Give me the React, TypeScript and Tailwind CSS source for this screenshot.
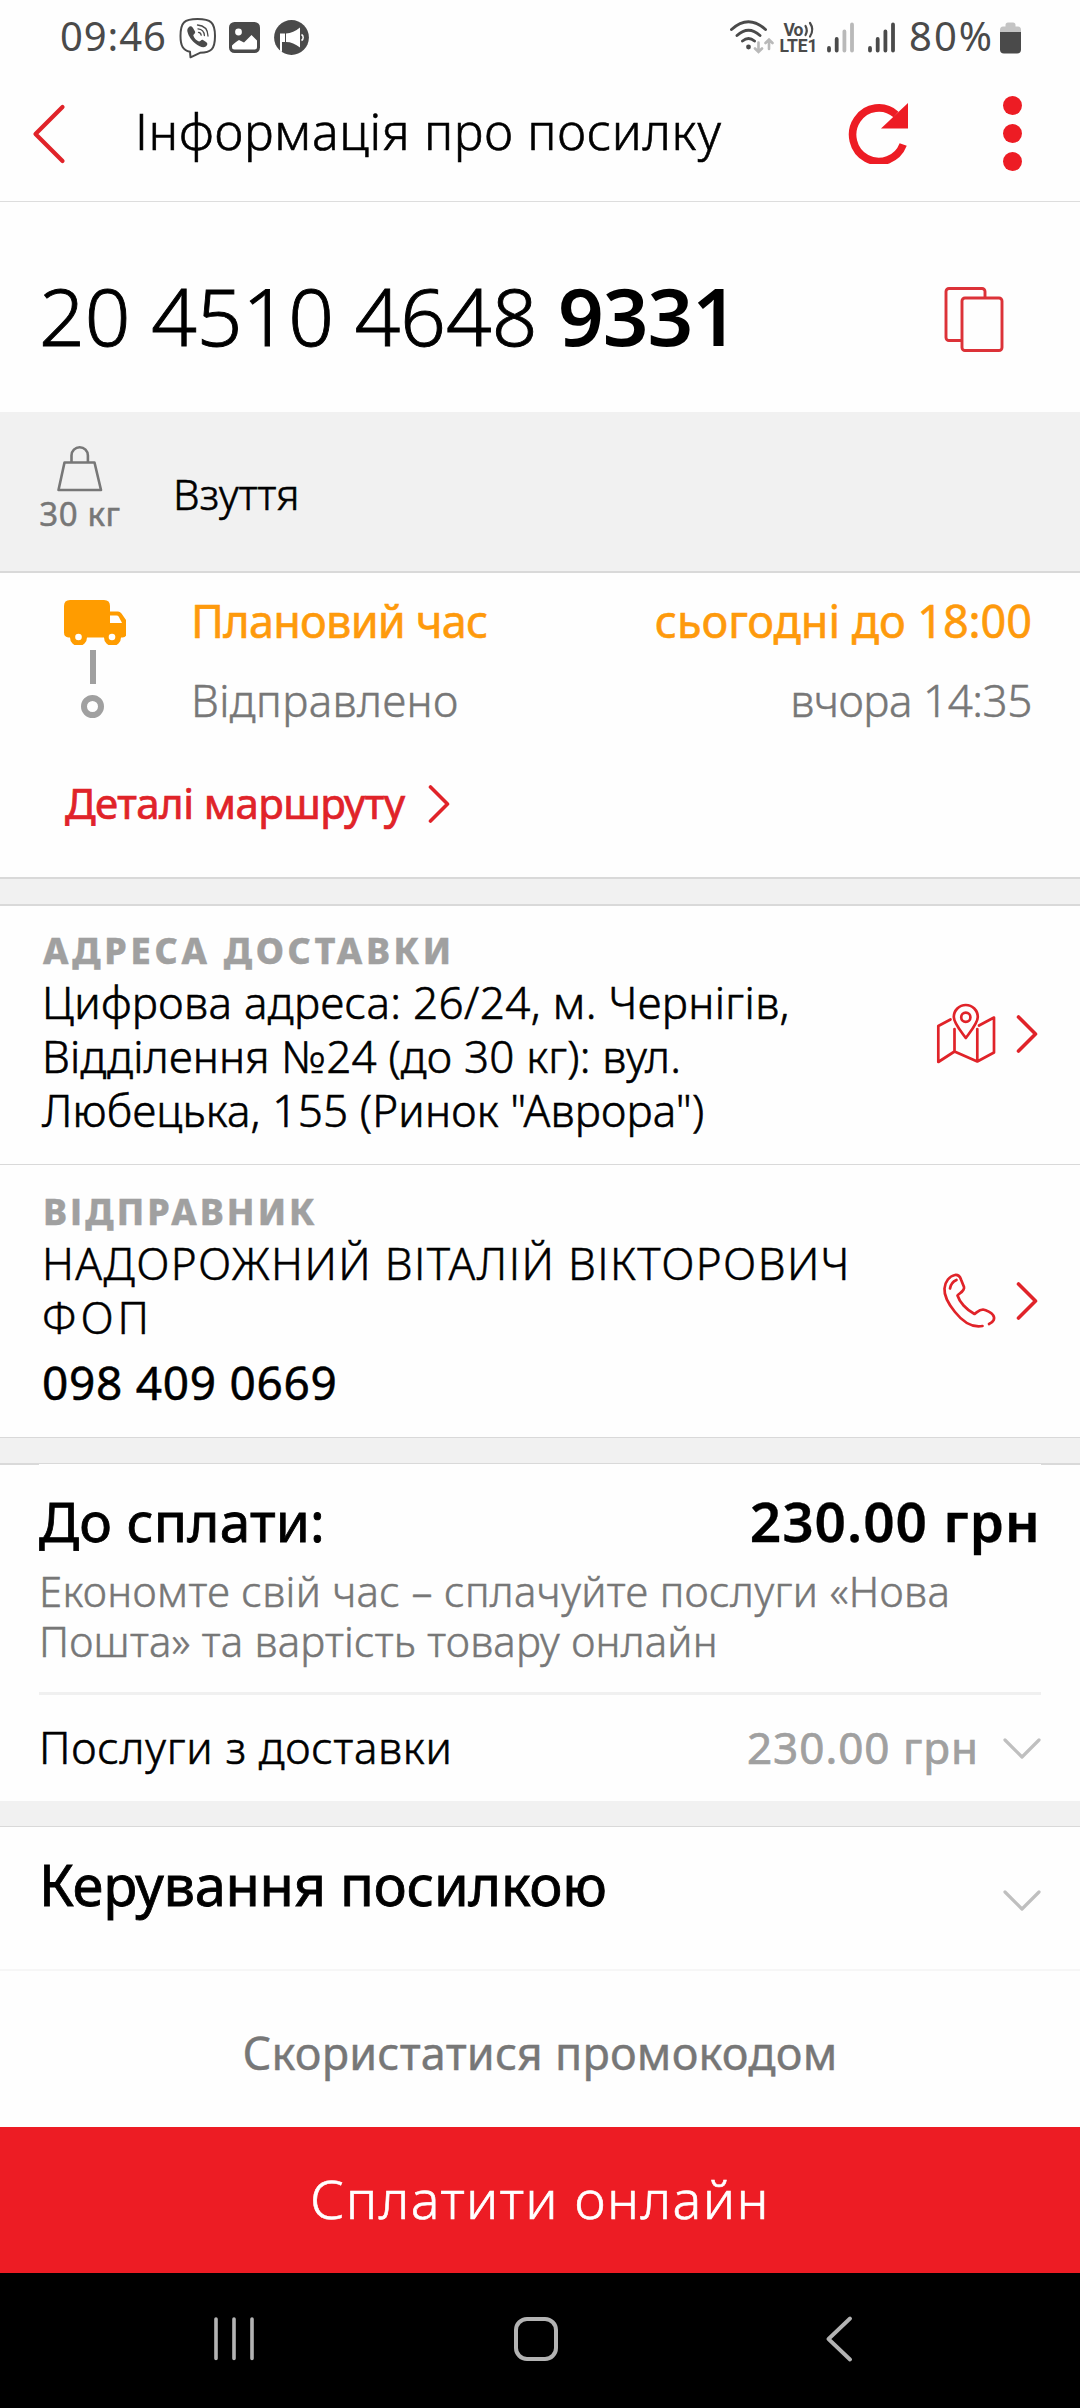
import React from "react";

const RED = "#e02329";

function Text({ c, children }: { c: string; children: string }) {
  return <span className={`block whitespace-nowrap ${c}`}>{children}</span>;
}

function ChevronRight() {
  return (
    <svg className="h-[40px] w-[22px] shrink-0" viewBox="0 0 22 40" fill="none" stroke={RED} strokeWidth="3.6" strokeLinecap="round" strokeLinejoin="round">
      <path d="M2.5 3 19.5 20 2.5 37" />
    </svg>
  );
}

function ChevronDown() {
  return (
    <svg className="h-[22px] w-[38px] shrink-0" viewBox="0 0 38 22" fill="none" stroke="#bfbfbf" strokeWidth="3.2" strokeLinecap="round" strokeLinejoin="round">
      <path d="M2 2 19 19 36 2" />
    </svg>
  );
}

function StatusBar() {
  return (
    <div className="flex h-[66px] text-[#4a4a4a]">
      <Text c="ml-[60px] w-[119px] pt-[5px] text-[40px] leading-[61px] tracking-[0.9px]">09:46</Text>
      <svg className="h-[66px] w-[38px]" viewBox="179 0 38 66" fill="none" stroke="#4a4a4a">
        <path d="M197.5 19c13.500 0 17.500 3.500 17.500 17s-4 16.500-15 16.800l-9.500 4.500-.5-5.500C183 50 180.500 46 180.500 36c0-13.500 3.500-17 17-17Z" strokeWidth="2" strokeLinejoin="round" />
        <path d="M188.500 27.500c1.500-1.800 3.200-1.500 4.500.5l2 3.400c.8 1.800-1.600 2.600-1.700 4.200.9 3 3 5.100 5.700 6 1.500 0 2.200-2.400 4-1.700l3.400 2.300c1.600 1.300 1 3-.6 4.300-2.800 1.800-6.500-.2-9.800-2.500-4-3-7.500-7.500-8.600-12.500-.3-1.500.1-3 1.100-4Z" fill="#4a4a4a" stroke="none" />
        <path d="M197.500 25c6.500.5 10.300 4.500 10.500 11M198 28.800c4 .4 6.200 2.700 6.400 6.700M198.500 32.300c1.700.2 2.500 1.100 2.700 2.900" strokeWidth="1.300" strokeLinecap="round" />
      </svg>
      <svg className="ml-[12px] h-[66px] w-[31px]" viewBox="229 0 31 66">
        <rect x="229" y="22" width="31" height="31" rx="5.500" fill="#4a4a4a" />
        <circle cx="238.500" cy="32" r="3.400" fill="#fff" />
        <path d="M232 45.500c2.500-2.500 5-4.500 7-5.500l5 2.500 7.500-7.500 5.500 5.500v6.500c0 1.700-.8 2.500-2.500 2.500h-20c-1.700 0-2.500-.8-2.500-2.500Z" fill="#fff" />
      </svg>
      <svg className="ml-[14px] h-[66px] w-[36px]" viewBox="274 0 36 66">
        <circle cx="291.500" cy="37.500" r="17.400" fill="#4a4a4a" />
        <path d="M280 33.500h5v8.500h-3v10l-2-1.200Z M286 33.500c5 0 9.500-2.500 14-6v20c-4.500-3.500-9-5.500-14-5.500Z" fill="#fff" />
        <path d="M301.500 34.500a3.500 3.500 0 0 1 0 6" fill="none" stroke="#fff" strokeWidth="1.500" />
      </svg>
      <svg className="ml-[419px] h-[66px] w-[47px]" viewBox="729 0 47 66" fill="none" stroke="#4a4a4a" strokeWidth="2.900" strokeLinecap="round">
        <path d="M731.500 29.500q17-15.500 34 0M737 35.500q11.500-10.500 23 0M742.500 41q6-5 12 0" />
        <circle cx="748.500" cy="47" r="2.400" fill="#4a4a4a" stroke="none" />
        <path d="M758.500 42.500v9M755 48.500l3.500 3.500 3.500-3.500M769 49v-9M765.500 43l3.500-3.500 3.500 3.500" stroke="#b9b9b9" strokeWidth="2.600" />
      </svg>
      <svg className="ml-[3px] h-[66px] w-[40px]" viewBox="779 0 40 66" fill="#4a4a4a">
        <text x="783.500" y="35.500" fontFamily="Roboto" fontWeight="700" fontSize="17.500" textLength="20">Vo</text>
        <text x="779.500" y="52" fontFamily="Roboto" fontWeight="700" fontSize="17.500" textLength="38">LTE1</text>
        <path d="M805.500 26q2.500 4.500 0 9M810 23q4.500 6.500 0 13.500" fill="none" stroke="#4a4a4a" strokeWidth="2.200" strokeLinecap="round" />
      </svg>
      <svg className="ml-[7px] h-[66px] w-[30px]" viewBox="826 0 30 66" fill="none" strokeWidth="3.800" strokeLinecap="round">
        <path d="M829 50.500v-2.500M836.700 50.500V39" stroke="#4a4a4a" />
        <path d="M844.400 50.500V31.500M852 50.500V24.500" stroke="#b9b9b9" />
      </svg>
      <svg className="ml-[11px] h-[66px] w-[30px]" viewBox="867 0 30 66" fill="none" stroke="#4a4a4a" strokeWidth="3.800" strokeLinecap="round">
        <path d="M870 50.500v-2.500M877.700 50.500V39M885.400 50.500V31.500M893 50.500V24.500" />
      </svg>
      <Text c="ml-[12px] w-[91px] pt-[5px] text-[40px] leading-[61px] tracking-[2px]">80%</Text>
      <svg className="h-[66px] w-[21px]" viewBox="1000 0 21 66">
        <path d="M1000 34v-4q0-3.500 3-3.500h2.500v-1.500q0-2.500 2.500-2.500h5q2.500 0 2.500 2.500V26.500h2.500q3 0 3 3.500v4Z" fill="#c4c4c4" />
        <path d="M1000 32h21v17.500q0 4-4 4h-13q-4 0-4-4Z" fill="#4a4a4a" />
      </svg>
    </div>
  );
}

function Header() {
  return (
    <header className="flex h-[136px] items-center border-b border-[#dddddd]">
      <svg className="ml-[31px] h-[62px] w-[35px]" viewBox="0 0 35 62" fill="none" stroke={RED} strokeWidth="4.200" strokeLinecap="round" strokeLinejoin="round">
        <path d="M31.500 4 4.500 31l27 27" />
      </svg>
      <Text c="ml-[69px] w-[712px] pb-[5px] text-[50px] font-light tracking-[0.7px] [-webkit-text-stroke:0.6px]">Інформація про посилку</Text>
      <svg className="h-[62px] w-[62px] -translate-y-px" viewBox="847 103 62 62">
        <path d="M903.200 145.500A26.200 26.800 0 1 1 896 115.500" fill="none" stroke="#ed1c24" strokeWidth="7.600" />
        <path d="M908 104v25.500h-27Z" fill="#ed1c24" />
      </svg>
      <div className="ml-[94px] flex flex-col gap-[9px]">
        <i className="size-[19px] rounded-full bg-[#ed1c24]" />
        <i className="size-[19px] rounded-full bg-[#ed1c24]" />
        <i className="size-[19px] rounded-full bg-[#ed1c24]" />
      </div>
    </header>
  );
}

function Tracking() {
  return (
    <section className="flex h-[210px] items-center">
      <Text c="ml-[39px] w-[519px] pt-[16px] text-[80px] leading-none font-light [-webkit-text-stroke:0.9px]">20 4510 4648</Text>
      <Text c="w-[386px] pt-[16px] text-[80px] leading-none font-semibold tracking-[-1px]">9331</Text>
      <svg className="mt-[25px] h-[66px] w-[60px]" viewBox="944 287 60 66" fill="none" stroke="#dc3238" strokeWidth="2.900">
        <path d="M961 340.500h-12a3 3 0 0 1-3-3v-46a3 3 0 0 1 3-3h33a3 3 0 0 1 3 3V298" />
        <rect x="962" y="298" width="40" height="52.500" rx="3" />
      </svg>
    </section>
  );
}

function Parcel() {
  return (
    <section className="flex h-[161px] border-b-2 border-[#d9d9d9] bg-[#f1f1f1]">
      <div className="ml-[39px] flex w-[82px] flex-col items-center pt-[33px] text-[#777777]">
        <svg className="h-[48px] w-[48px]" viewBox="56 445 48 48" fill="none" stroke="#777" strokeWidth="2.600" strokeLinejoin="round">
          <path d="M71.500 462v-6.500a8.200 8.200 0 0 1 16.400 0v6.500M64.500 462.500h30l6.500 27.500H58.500Z" />
        </svg>
        <Text c="text-[33px] leading-[42px] tracking-[0.6px] [-webkit-text-stroke:0.5px]">30 кг</Text>
      </div>
      <div className="ml-[52px] flex items-center pt-[5px]">
        <Text c="text-[42px] leading-[54px] font-light [-webkit-text-stroke:0.6px]">Взуття</Text>
      </div>
    </section>
  );
}

function Route() {
  return (
    <section className="flex h-[306px] flex-col border-b-2 border-[#d9d9d9] pt-[8px]">
      <div className="flex">
        <div className="ml-[64px] flex w-[62px] flex-col pt-[19px]">
          <svg className="h-[45px] w-[62px]" viewBox="0 0 62 45">
            <path d="M6 0h34q6 0 6 6v5.500h8q2 0 3.500 2l4.500 6.500q.5 1 .5 2v11.500q0 4-4 4h-1.500a8.500 8.500 0 0 1-17 0h-17a8.500 8.500 0 0 1-17 0H4.500Q0 37 0 32.500V6Q0 0 6 0Z" fill="#ff9c00" />
            <path d="M46 15.500h6.500q1.500 0 2.300 1.300l3.200 6.200H46Z" fill="#fff" />
            <circle cx="14.500" cy="37" r="3.300" fill="#fff" />
            <circle cx="48" cy="37" r="3.300" fill="#fff" />
          </svg>
          <div className="mt-[5px] ml-[26px] h-[34px] w-[6px] bg-[#a0a0a0]" />
          <div className="mt-[11px] ml-[17px] size-[23px] rounded-full border-[6px] border-[#a0a0a0]" />
        </div>
        <div className="mr-[48px] ml-[65px] flex grow flex-col">
          <div className="flex h-[79px] items-center justify-between pt-px text-[#fe9a0c]">
            <Text c="text-[45px] tracking-[-0.75px] [-webkit-text-stroke:0.6px]">Плановий час</Text>
            <Text c="text-[45px] tracking-[-0.05px] [-webkit-text-stroke:0.6px]">сьогодні до 18:00</Text>
          </div>
          <div className="flex h-[79px] items-center justify-between text-[#777777]">
            <Text c="text-[44px] font-light tracking-[0.4px] [-webkit-text-stroke:0.5px]">Відправлено</Text>
            <Text c="text-[44px] font-light tracking-[-0.44px] [-webkit-text-stroke:0.5px]">вчора 14:35</Text>
          </div>
        </div>
      </div>
      <div className="mt-[23px] ml-[65px] flex h-[80px] items-center text-[#e02329]">
        <Text c="w-[363px] text-[42px] tracking-[-0.55px] [-webkit-text-stroke:0.7px]">Деталі маршруту</Text>
        <div className="mt-[3px]"><ChevronRight /></div>
      </div>
    </section>
  );
}

function Contacts() {
  return (
    <>
      <section className="flex h-[259px] items-center border-b border-[#d9d9d9]">
        <div className="w-[893px] self-start pt-[22px] pl-[41px] text-[44px] leading-[54px] font-light [-webkit-text-stroke:0.6px]">
          <Text c="mb-[1px] ml-[2px] text-[36px] leading-[46px] font-extrabold tracking-[3.7px] text-[#a0a0a0] [-webkit-text-stroke:0.4px]">АДРЕСА ДОСТАВКИ</Text>
          <Text c="ml-[1px] tracking-[0.36px]">Цифрова адреса: 26/24, м. Чернігів,</Text>
          <Text c="ml-[1px] tracking-[0.18px]">Відділення №24 (до 30 кг): вул.</Text>
          <Text c="ml-[1px] tracking-[0.18px]">Любецька, 155 (Ринок "Аврора")</Text>
        </div>
        <svg className="ml-[42px] h-[62px] w-[62px] -translate-y-[1px]" viewBox="936 1003 62 62" fill="none" stroke={RED} strokeWidth="2.700" strokeLinecap="round" strokeLinejoin="round">
          <path d="M951.500 1019.500 939.300 1026v36l16.200-10.500 22.800 10 16.700-9v-35l-15 8M955.500 1029v22.500M978.300 1029v32.500" />
          <path d="M966.800 1038c-5.500-7.500-12-15-12-21a12 12 0 0 1 24 0c0 6-6.500 13.500-12 21Z" />
          <circle cx="966.800" cy="1017.300" r="4.600" />
        </svg>
        <div className="ml-[19px] -translate-y-[1px]"><ChevronRight /></div>
      </section>
      <section className="flex h-[273px] items-center border-b border-[#d9d9d9]">
        <div className="w-[893px] self-start pt-[24px] pl-[41px] text-[44px] leading-[54px] font-light [-webkit-text-stroke:0.5px]">
          <Text c="mb-[1px] ml-[2px] text-[36px] leading-[46px] font-extrabold tracking-[3.1px] text-[#a0a0a0] [-webkit-text-stroke:0.4px]">ВІДПРАВНИК</Text>
          <Text c="ml-[1px] tracking-[1.42px]">НАДОРОЖНИЙ ВІТАЛІЙ ВІКТОРОВИЧ</Text>
          <Text c="ml-[1px] tracking-[4px]">ФОП</Text>
          <Text c="mt-[11px] ml-[1px] text-[46px] font-normal tracking-[0.7px]">098 409 0669</Text>
        </div>
        <svg className="ml-[49px] h-[60px] w-[56px]" viewBox="943 1271 56 60" fill="none" stroke={RED} strokeWidth="2.700" strokeLinecap="round" strokeLinejoin="round">
          <path d="M983.500 1326c-10.500 2-20-4.500-27.500-14-6.500-8-11-17-10.500-23.500.5-7 5-12.500 10.500-13.500 3-.3 5 1.500 6 4.500l3 7.500c1 4-5 6.500-6.500 8.500 2 6.500 8.500 14 17 18.500 2.500-1.500 4.500-4.500 8.500-4.500 3.500.5 8.500 3.500 10 5.500 2.500 3.500.5 7-4 9" />
          <path d="M951 1288.500c.5-3.500 3-7 6.500-8.500" />
        </svg>
        <div className="ml-[18px]"><ChevronRight /></div>
      </section>
    </>
  );
}

function Payment() {
  return (
    <section className="flex h-[337px] flex-col px-[39px]">
      <div className="-mx-[39px] flex h-px justify-between">
        <i className="w-[39px] bg-[#d9d9d9]" />
        <i className="w-[39px] bg-[#d9d9d9]" />
      </div>
      <div className="mt-[21px] flex h-[70px] items-center justify-between">
        <Text c="text-[55px] tracking-[0.16px] [-webkit-text-stroke:0.8px]">До сплати:</Text>
        <Text c="text-[55px] font-semibold tracking-[0.95px] [-webkit-text-stroke:0.3px]">230.00 грн</Text>
      </div>
      <div className="mt-[10px] h-[129px] border-b-3 border-[#f0f0f0] text-[42px] leading-[50px] font-light text-[#777777] [-webkit-text-stroke:0.5px]">
        <Text c="tracking-[0.34px]">Економте свій час – сплачуйте послуги «Нова</Text>
        <Text c="tracking-[0.22px]">Пошта» та вартість товару онлайн</Text>
      </div>
      <div className="flex grow items-center pb-[2px]">
        <Text c="grow text-[44px] font-light tracking-[0.7px] [-webkit-text-stroke:0.6px]">Послуги з доставки</Text>
        <Text c="mr-[24px] text-[44px] tracking-[1px] text-[#a0a0a0] [-webkit-text-stroke:0.7px]">230.00 грн</Text>
        <div className="mt-[3px]"><ChevronDown /></div>
      </div>
    </section>
  );
}

function Gap() {
  return <div className="h-[26px] border-b border-[#d9d9d9] bg-[#f1f1f1]" />;
}

function NavBar() {
  return (
    <nav className="flex h-[135px] bg-black pt-[43px]">
      <svg className="ml-[213px] h-[46px] w-[42px]" viewBox="0 0 42 46" stroke="#b3b3b3" strokeWidth="3.600" strokeLinecap="round">
        <path d="M3 3v39.500M21 3v39.500M39 3v39.500" />
      </svg>
      <div className="mt-[1px] ml-[259px] h-[44px] w-[44px] rounded-[13px] border-4 border-[#b3b3b3]" />
      <svg className="ml-[267px] h-[46px] w-[28px]" viewBox="0 0 28 46" fill="none" stroke="#b3b3b3" strokeWidth="3.800" strokeLinecap="round" strokeLinejoin="round">
        <path d="M25 2.500 3.500 23 25 43.500" />
      </svg>
    </nav>
  );
}

export default function App() {
  return (
    <div className="flex h-[2408px] w-[1080px] flex-col overflow-hidden bg-[#fefefe] font-['Noto_Sans',sans-serif] text-black">
      <StatusBar />
      <Header />
      <Tracking />
      <Parcel />
      <Route />
      <div className="h-[27px] border-b-2 border-[#d9d9d9] bg-[#f1f1f1]" />
      <Contacts />
      <Gap />
      <Payment />
      <Gap />
      <section className="flex h-[144px] items-center justify-between border-b-2 border-[#f6f6f6] px-[39px]">
        <Text c="pb-[29px] text-[56px] tracking-[-0.3px] [-webkit-text-stroke:0.8px]">Керування посилкою</Text>
        <div className="mt-[5px]"><ChevronDown /></div>
      </section>
      <section className="flex h-[156px] items-center justify-center pt-[7px] text-[#777777]">
        <Text c="text-[45px] tracking-[0.2px] [-webkit-text-stroke:0.4px]">Скористатися промокодом</Text>
      </section>
      <button className="flex h-[146px] items-center justify-center bg-[#ed1c24] pb-[4px] text-white">
        <Text c="text-[54px] font-light tracking-[1.4px] [-webkit-text-stroke:0.6px]">Сплатити онлайн</Text>
      </button>
      <NavBar />
    </div>
  );
}
